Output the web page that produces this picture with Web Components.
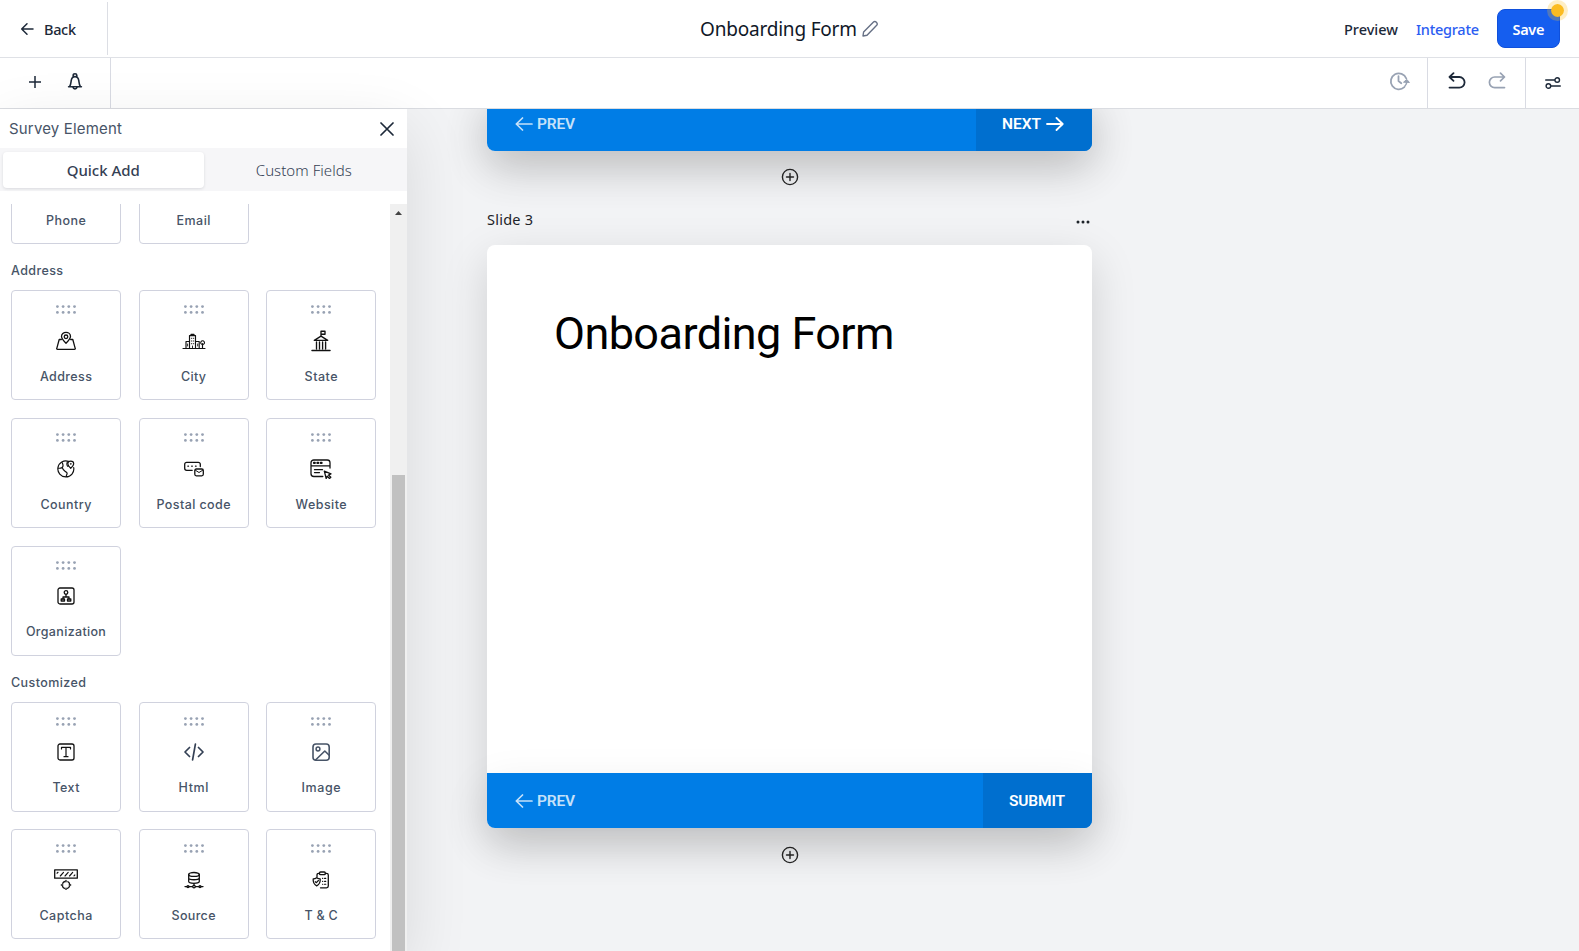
<!DOCTYPE html>
<html lang="en">
<head>
<meta charset="utf-8">
<title>Onboarding Form</title>
<style>
html,body{margin:0;height:100%;overflow:hidden}
body{font-family:"Noto Sans","Open Sans",sans-serif;color:#101828;background:#f2f3f5}
</style>
</head>
<body>
<survey-builder></survey-builder>
<script>
const ICONS = {
  back:[14,14,'<path d="M13 7H2M7 1.700L1.700 7l5.300 5.300" stroke-width="1.500"/>'],
  plus:[12,12,'<path d="M6 0v12M0 6h12" stroke-width="1.5"/>'],
  bell:[16,18,'<path d="M1.6 13.8h12.8M2.600 13.600c1.300-2 1.300-4 1.600-6C4.600 5 6 3.600 8 3.600s3.400 1.400 3.800 4c.3 2 .3 4 1.600 6M6.200 3.700V2.300a1.800 1.500 0 0 1 3.600 0v1.400M6 14.400c.4 2 3.600 2 4 0" stroke-width="1.600"/>'],
  pencil:[18,18,'<path d="M2 16l.6-4L12.500 2.100a1.800 1.800 0 0 1 2.600 0l.6.6a1.800 1.800 0 0 1 0 2.600L6 15.300z" stroke-width="1.400"/>'],
  history:[21,20,'<path d="M15.300 16.200A8 8 0 1 1 17.300 7.500M9.500 5.200V10l2.800 2.200" stroke-width="1.800"/><path d="M14.800 11l3-2.600 2.400 2.800z" fill="currentColor" stroke-width="1"/><path d="M17.800 10.500q0 2.700-2 4.700" stroke-width="1.500"/>'],
  undo:[18,18,'<path d="M5.500 1.200L1.500 5l4 3.800M2 5h9.300a5.300 5.300 0 0 1 0 10.600H1.500" stroke-width="1.800"/>'],
  redo:[18,18,'<path d="M12.500 1.200l4 3.800-4 3.800M16 5H6.700a5.300 5.300 0 0 0 0 10.600h9.800" stroke-width="1.700"/>'],
  sliders:[16,12,'<path d="M.7 3h8.800M6 9h9.300" stroke-width="1.500"/><circle cx="12.200" cy="3" r="2.300" stroke-width="1.400"/><circle cx="3.400" cy="9" r="2.300" stroke-width="1.400"/>'],
  close:[14,14,'<path d="M1 1l12 12M13 1L1 13" stroke-width="1.700"/>'],
  add:[18,18,'<circle cx="9" cy="9" r="7.600" stroke-width="1.400"/><path d="M9 5.500v7M5.500 9h7" stroke-width="1.400"/>'],
  left:[18,14,'<path d="M17 7H1.500M7.500 1L1.300 7l6.200 6" stroke-width="1.700"/>'],
  right:[18,14,'<path d="M1 7h15.500M10.500 1l6.200 6-6.200 6" stroke-width="1.800"/>'],
  more:[14,4,'<g fill="currentColor" stroke="none"><circle cx="2" cy="2" r="1.500"/><circle cx="7" cy="2" r="1.500"/><circle cx="12" cy="2" r="1.500"/></g>'],
  dots:[20,9,'<g fill="#98a2b3" stroke="none"><circle cx="1.400" cy="1.600" r="1.400"/><circle cx="7.100" cy="1.600" r="1.400"/><circle cx="12.800" cy="1.600" r="1.400"/><circle cx="18.500" cy="1.600" r="1.400"/><circle cx="1.400" cy="7.400" r="1.400"/><circle cx="7.100" cy="7.400" r="1.400"/><circle cx="12.800" cy="7.400" r="1.400"/><circle cx="18.500" cy="7.400" r="1.400"/></g>'],
  up:[7,4,'<path d="M0 4L3.500 0 7 4z" fill="#444" stroke="none"/>'],
  address:[22,20,'<path d="M6.300 8.500H4.200L1.800 17.300q-.3 1 .8 1h16.800q1.100 0 .8-1L17.800 8.500h-2.100M11 12.200c-2.300-2.300-4.500-4.600-4.500-6.700a4.500 4.100 0 0 1 9 0c0 2.100-2.200 4.400-4.500 6.700z"/><circle cx="11" cy="5.800" r="1.800"/>'],
  city:[24,18,'<path d="M1 16.500h22M4 16V9.500h3.300M7.500 16V3.600h6V16M9 3.400V2.300h3v1.100M14 9.500h3.200V16M20.500 16v-4.500" stroke-width="1.150"/><path d="M9.300 6.300h.5M11.300 6.300h.5M9.300 9h.5M11.300 9h.5M9.300 11.700h.5M11.300 11.700h.5M10.500 16v-2M5.600 12v2M15.700 12v2" stroke-width=".9"/><path d="M18.900 11.600a1.900 2 0 1 1 3.400 0l-1.700 1.200z" stroke-width="1.100"/>'],
  state:[20,22,'<path d="M1 20.400h18" stroke-width="1.500"/><path d="M10 6V1.200h4v3h-3.500M3.300 10.300h13.400L10 6.200zM5.500 12v7M8.500 12v7M11.600 12v7M14.600 12v7" stroke-width="1.350"/>'],
  country:[18,18,'<path d="M11.500 1.400A8 8 0 1 0 16.700 7.500M1.400 8.200c2.500.2 4.200-.4 4.500-1.800.3-1.200.1-2-.5-3.300M9.500 16.900c-1-1.600 1.500-2.800.3-4.200-1.400-1.700-3.600-2-4.300-4.500" stroke-width="1.200"/><path d="M10.300 2c-.8 2.200-.8 3.500.7 4.500" stroke-width="1.100"/><path d="M13.700 8.400c-1.800-1.800-2.900-3.200-2.900-4.600a2.900 2.700 0 0 1 5.900 0c0 1.400-1.200 2.800-3 4.600z" stroke-width="1.150"/><circle cx="13.700" cy="3.900" r=".4" stroke-width=".8"/>'],
  postal:[20,16,'<path d="M16.300 5.500V3.300a2 2 0 0 0-2-2H2.700a2 2 0 0 0-2 2v4a2 2 0 0 0 2 2h5.500"/><path d="M3.900 5.200h.6M7.700 5.200h.6M11.500 5.200h.6" stroke-width="1.300"/><rect x="10.800" y="8" width="8.500" height="6.800" rx="1.500"/><path d="M11.500 9.300l3.500 2.200 3.600-2.200" stroke-width="1"/>'],
  website:[22,20,'<path d="M20 9V3.800a2.800 2.800 0 0 0-2.800-2.800H3.800A2.800 2.800 0 0 0 1 3.800v10.900a2.800 2.800 0 0 0 2.800 2.800h9M1 6.800h19M4.500 10.700h8M4.500 13.600h5"/><path d="M4 3.900h.8M7.400 3.900h.8M10.800 3.900h.8" stroke-width="2.200"/><path d="M14.300 12.200l6.700 2.600-2.500 1.200 2.300 2.300-1.300 1.200-2.300-2.200-1 2.200z"/>'],
  organization:[18,18,'<rect x="1" y="1" width="16" height="16" rx="2"/><circle cx="9" cy="5.500" r="1.800"/><path d="M9 7.500v2.300M6 12v-2h6v2"/><rect x="4.200" y="12" width="3.300" height="2"/><rect x="10.500" y="12" width="3.300" height="2"/>'],
  text:[18,18,'<rect x="1" y="1" width="16" height="16" rx="2"/><path d="M4.500 6V4.300h9V6M9 4.300v9.300M7 13.700h4" stroke-width="1.200"/>'],
  html:[20,18,'<path d="M5.500 4.500L1 9l4.500 4.500M14.500 4.500L19 9l-4.500 4.500M11.400 1.200L8.600 16.800" stroke-width="1.700"/>'],
  image:[18,18,'<rect x="1" y="1" width="16.200" height="16.200" rx="3" stroke-width="1.600"/><circle cx="6" cy="6" r="1.900" stroke-width="1.500"/><path d="M3.800 16.800l9-8.800 4.400 4.300" stroke-width="1.600"/>'],
  captcha:[24,21,'<rect x=".7" y=".8" width="22.600" height="8.400"/><path d="M3 4.200l1-.9M6.300 7l3.200-3.600M11 7l3.200-3.600M15.500 7l3.200-3.600M20 6.800l.8-.8" stroke-width="1.150"/><circle cx="12" cy="16" r="3.800" stroke-linecap="butt" stroke-dasharray="3.970 2" stroke-dashoffset="-1"/><path d="M12 11.300v1.500M12 19.200v1.500M7.300 16h1.500M15.200 16h1.500"/>'],
  source:[20,18,'<ellipse cx="10" cy="3.400" rx="5.300" ry="1.900"/><path d="M4.700 3.400v7.200c0 2.300 10.600 2.300 10.600 0V3.400M4.700 7c0 2.300 10.600 2.300 10.600 0M10 12.200v2M1 15.600h2M5 15.600h3.500M11.500 15.600H15M17 15.600h2"/><circle cx="4" cy="15.600" r="1"/><circle cx="10" cy="15.600" r="1.300"/><circle cx="16" cy="15.600" r="1"/>'],
  terms:[18,18,'<path d="M5 6V4q0-1.700 1.700-1.700h.8M13.300 2.300h1.200q1.800 0 1.800 1.700v11q0 1.800-1.800 1.800h-6"/><rect x="7.500" y="1" width="5.800" height="2.700" rx="1"/><path d="M4.700 6.700q1.600 1.200 3.500 1.200c.3 3.600-.9 5.700-3.500 7C2.100 13.600.9 11.500 1.200 7.900q1.900 0 3.500-1.200z"/><path d="M3.300 10.700l1.100 1 2-2.200M10.500 7.300h.3M12.500 7.300h1.300M10.500 10.300h.3M12.500 10.300h1.300M10.500 13.200h.3M12.500 13.200h1.300" stroke-width="1.150"/>']
};

class UiIcon extends HTMLElement {
  connectedCallback(){
    if(this.shadowRoot) return;
    const [w,h,body]=ICONS[this.getAttribute('name')];
    this.attachShadow({mode:'open'}).innerHTML=`<style>:host{display:block;flex:none;width:${w}px;height:${h}px}svg{display:block}</style>
    <svg width="${w}" height="${h}" viewBox="0 0 ${w} ${h}" fill="none" stroke="currentColor" stroke-width="1.300" stroke-linecap="round" stroke-linejoin="round">${body}</svg>`;
  }
}
customElements.define('ui-icon',UiIcon);

/* A one-line label whose tracking is set so that it spans a given width. */
class FitText extends HTMLElement {
  connectedCallback(){
    if(this.shadowRoot) return;
    this.attachShadow({mode:'open'}).innerHTML=`<style>:host{display:inline-block;white-space:nowrap;flex:none}</style><span><slot></slot></span>`;
    const target=+this.getAttribute('width');
    if(!target) return;
    const span=this.shadowRoot.querySelector('span');
    const spacing=(target-span.getBoundingClientRect().width)/(this.textContent.length-1);
    span.style.letterSpacing=spacing+'px';
    this.style.width=target+'px';
  }
}
customElements.define('fit-text',FitText);

function define(name,html){
  const tpl=document.createElement('template');
  tpl.innerHTML=html;
  customElements.define(name,class extends HTMLElement{
    constructor(){super();this.attachShadow({mode:'open'}).append(tpl.content.cloneNode(true));}
  });
}

define('top-bar',`<style>
:host{display:flex;height:57px;background:#fff;border-bottom:1px solid #dfe1e6;font-size:14.500px;color:#1d2939}
.back{box-sizing:border-box;width:108px;height:53px;margin-top:2px;border-right:1px solid #dcdee4;display:flex;align-items:center;padding:0 0 0 20px;gap:10px;font-weight:500}
.title{flex:1;display:flex;align-items:center;gap:4px;padding-left:592px;font-size:19px;color:#101828}
.title ui-icon{color:#667085}
.actions{display:flex;align-items:center;padding-right:19px;font-weight:500}
.preview{margin-right:18px}.link{color:#2b5df2;margin-right:18px}
.save{position:relative;box-sizing:border-box;width:63px;height:39px;border-radius:8px;background:#155eef;border:1px solid #0f50dc;color:#fff;display:flex;align-items:center;justify-content:center;font-weight:600}
.badge{position:absolute;right:-9px;top:-10px;width:13px;height:13px;border-radius:50%;background:#fbbc22;border:4.500px solid #fbbf2444;background-clip:padding-box}
</style>
<div class="back"><ui-icon name="back"></ui-icon><fit-text width="32">Back</fit-text></div>
<div class="title"><fit-text width="157">Onboarding Form</fit-text><ui-icon name="pencil"></ui-icon></div>
<div class="actions"><fit-text class="preview" width="54">Preview</fit-text><fit-text class="link" width="63">Integrate</fit-text>
<div class="save"><fit-text width="32">Save</fit-text><i class="badge"></i></div></div>`);

define('tool-bar',`<style>
:host{display:flex;height:50px;background:#fff;border-bottom:1px solid #dadce1;color:#1d2939}
div{display:flex;align-items:center;box-sizing:border-box}
.left{width:111px;border-right:1px solid #d9dbe3;padding-left:29px;gap:26px;padding-bottom:2px}
.mid{flex:1;justify-content:flex-end;padding:0 17px 5px 0}.mid,.off{color:#98a2b3}
.undo{width:99px;border:solid #d9dbe3;border-width:0 1px;padding:0 0 5px 20px;gap:22px}
.set{width:53px;padding:0 0 1px 19px}
</style>
<div class="left"><ui-icon name="plus"></ui-icon><ui-icon name="bell"></ui-icon></div>
<div class="mid"><ui-icon name="history"></ui-icon></div>
<div class="undo"><ui-icon name="undo"></ui-icon><ui-icon class="off" name="redo"></ui-icon></div>
<div class="set"><ui-icon name="sliders"></ui-icon></div>`);

class ElementCard extends HTMLElement {
  connectedCallback(){
    if(this.shadowRoot) return;
    this.attachShadow({mode:'open'}).innerHTML=`<style>
    :host{box-sizing:border-box;width:110px;height:110px;border:1px solid #d0d2de;border-radius:4px;background:#fff;display:flex;flex-direction:column;align-items:center;padding:14px .2px 0 0;color:#111}
    .glyph{height:24px;margin-top:14.800px;display:flex;align-items:center;color:${this.getAttribute('tone')||'#111'}}
    .label{margin-top:14.800px;font:450 12.500px/18px Inter,sans-serif;color:#475467}
    </style><ui-icon name="dots"></ui-icon><div class="glyph"><ui-icon name="${this.getAttribute('icon')}"></ui-icon></div>
    <fit-text class="label" width="${this.getAttribute('span')}">${this.getAttribute('label')}</fit-text>`;
  }
}
customElements.define('element-card',ElementCard);

define('card-group',`<style>
:host{display:block}
h3{margin:0;height:46px;box-sizing:border-box;padding-top:18px;font:450 12.500px/18px Inter,sans-serif;color:#475467}
.grid{display:grid;grid-template-columns:repeat(3,110px);gap:17.600px}
</style><h3><slot name="title"></slot></h3><div class="grid"><slot></slot></div>`);

define('survey-panel',`<style>
:host{display:flex;flex-direction:column;width:407px;background:#fff;box-shadow:0 20px 60px rgba(0,0,0,.11)}
header{height:39px;display:flex;align-items:center;justify-content:space-between;padding:0 13px 0 9px;font:15px Inter,sans-serif;color:#475467}
header ui-icon{color:#1d2939}
.tabs{height:43px;box-sizing:border-box;background:#f6f6f8;display:flex;padding:4px 3px 3px;font-size:15px;color:#344054}
.tab{flex:1;display:flex;align-items:center;justify-content:center;font-weight:350}
.tab.on{background:#fff;border-radius:4px;box-shadow:0 1px 3px rgba(16,24,40,.12);font-weight:500}
.body{flex:1;min-height:0;margin-top:13px;display:flex;overflow:hidden}
.list{flex:1;overflow:hidden;padding-left:11px}
card-group:first-child{margin-top:-115.600px}
.bar{width:17px;background:#f0f0f0;display:flex;flex-direction:column;align-items:center}
.bar ui-icon{margin-top:7px}
.thumb{width:13px;margin-top:260px;flex:1;background:#c1c1c1}
</style>
<header><fit-text width="113">Survey Element</fit-text><ui-icon name="close"></ui-icon></header>
<div class="tabs"><div class="tab on"><fit-text width="73">Quick Add</fit-text></div><div class="tab"><fit-text width="96">Custom Fields</fit-text></div></div>
<div class="body"><div class="list">
<card-group>
<element-card icon="text" label="Phone" span="40"></element-card><element-card icon="text" label="Email" span="34"></element-card></card-group>
<card-group><fit-text slot="title" width="52">Address</fit-text>
<element-card icon="address" label="Address" span="52"></element-card><element-card icon="city" label="City" span="25"></element-card><element-card icon="state" label="State" span="33"></element-card>
<element-card icon="country" label="Country" span="51"></element-card><element-card icon="postal" label="Postal code" span="74"></element-card><element-card icon="website" label="Website" span="51"></element-card>
<element-card icon="organization" label="Organization" span="80"></element-card></card-group>
<card-group><fit-text slot="title" width="75">Customized</fit-text>
<element-card icon="text" label="Text" span="27"></element-card><element-card icon="html" tone="#344054" label="Html" span="30"></element-card><element-card icon="image" tone="#475467" label="Image" span="39"></element-card>
<element-card icon="captcha" label="Captcha" span="53"></element-card><element-card icon="source" label="Source" span="44"></element-card><element-card icon="terms" label="T &amp; C" span="33"></element-card></card-group>
</div><div class="bar"><ui-icon name="up"></ui-icon><div class="thumb"></div></div></div>`);

define('slide-footer',`<style>
:host{display:flex;height:55px;background:#007de6;border-radius:0 0 8px 8px;overflow:hidden;font:600 15.500px Roboto,sans-serif;box-shadow:0 15px 45px rgba(0,0,0,.1)}
.prev{flex:1;display:flex;align-items:center;gap:4px;padding-left:28px;color:#c5e1f9}
.next{display:flex;align-items:center;gap:5px;padding:0 27px 0 26px;background:#006fcf;color:#fff}
</style><div class="prev"><ui-icon name="left"></ui-icon><fit-text width="38">PREV</fit-text></div><div class="next"><slot></slot></div>`);

define('slide-canvas',`<style>
:host{display:block;overflow:hidden;background:#f2f3f5}
.col{width:605px;margin:-13px 0 0 80px}
.add{height:52px;display:flex;align-items:center;justify-content:center;color:#222}
.add.last{height:54px}
.head{height:42px;display:flex;justify-content:space-between;align-items:flex-start;font-size:14.500px;line-height:20px;color:#1d2329}
.head fit-text{margin-top:6px}
.head ui-icon{margin:17px 2px 0 0}
.slide{background:#fff;border-radius:8px;box-shadow:0 15px 45px rgba(0,0,0,.15)}
slide-footer ui-icon{margin:0 1px 0 0}
.content{height:528px;box-sizing:border-box;padding:62px 0 0 67px;font:45px/53px Roboto,sans-serif;color:#000}
</style>
<div class="col">
<div class="slide"><slide-footer><fit-text width="39">NEXT</fit-text><ui-icon name="right"></ui-icon></slide-footer></div>
<div class="add"><ui-icon name="add"></ui-icon></div>
<div class="head"><fit-text width="46">Slide 3</fit-text><ui-icon name="more"></ui-icon></div>
<div class="slide"><div class="content"><fit-text width="340.500">Onboarding Form</fit-text></div>
<slide-footer><fit-text width="56">SUBMIT</fit-text></slide-footer></div>
<div class="add last"><ui-icon name="add"></ui-icon></div>
</div>`);

define('survey-builder',`<style>
:host{display:flex;flex-direction:column;height:100vh;overflow:hidden}
main{flex:1;min-height:0;display:flex}
survey-panel{flex:none;z-index:1}
slide-canvas{flex:1;min-width:0}
</style><top-bar></top-bar><tool-bar></tool-bar><main><survey-panel></survey-panel><slide-canvas></slide-canvas></main>`);
</script>
</body>
</html>
